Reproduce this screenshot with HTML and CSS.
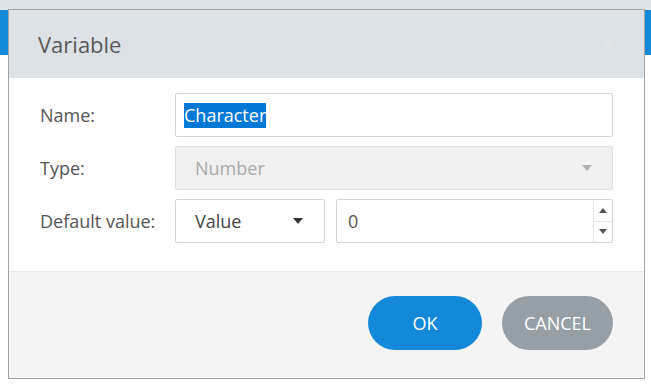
FILE: index.html
```html
<!DOCTYPE html>
<html lang="en">
<head>
  <meta charset="UTF-8">
  <meta name="viewport" content="width=device-width, initial-scale=1.0">
  <title>Variable</title>
  <link rel="stylesheet" href="styles.css">
</head>
<body>
  <!-- App behind the modal -->
  <div class="app-top"></div>
  <div class="app-bar"></div>

  <!-- Modal dialog -->
  <div class="dialog">
    <div class="dialog-header">
      <h2>Variable</h2>
      <span class="close">&#x2715;</span>
    </div>

    <div class="dialog-body">
      <label class="label">Name:</label>
      <div class="field"><span class="selected">Character</span></div>

      <label class="label">Type:</label>
      <div class="field disabled">
        <span>Number</span>
        <span class="caret light"></span>
      </div>

      <label class="label">Default value:</label>
      <div class="value-row">
        <div class="field select">
          <span>Value</span>
          <span class="caret"></span>
        </div>
        <div class="field number">
          <span class="num">0</span>
          <div class="spinner">
            <span class="up"></span>
            <span class="down"></span>
          </div>
        </div>
      </div>
    </div>

    <div class="dialog-footer">
      <button class="btn ok">OK</button>
      <button class="btn cancel">CANCEL</button>
    </div>
  </div>
</body>
</html>
```

FILE: styles.css
```css
* {
  margin: 0;
  padding: 0;
  box-sizing: border-box;
}
body {
  background: #fff;
  font-family: 'Open Sans', 'Noto Sans', sans-serif;
  color: #555;
}

/* sfondo dell'app */
.app-top {
  height: 10px;
  background: #dde2e6;
}
.app-bar {
  height: 45px;
  background: #1589d9;
}

/* dialog */
.dialog {
  position: absolute;
  left: 8px;
  top: 9px;
  width: 637px;
  border: 1px solid #a3a3a3;
  background: #fff;
}
.dialog-header {
  height: 68px;
  background: #dde2e6;
  display: flex;
  align-items: center;
  justify-content: space-between;
  padding: 0 30px 0 29px;
}
.dialog-header h2 {
  font-size: 22px;
  font-weight: 400;
  color: #595959;
}
.close {
  color: #e4e8eb;
  font-size: 13px;
}

.dialog-body {
  display: grid;
  grid-template-columns: 135px 1fr;
  row-gap: 9px;
  align-items: center;
  padding: 15px 31px 28px 31px;
}
.label {
  font-size: 18px;
  color: #555;
}

.field {
  height: 44px;
  border: 1px solid #cfd7de;
  border-radius: 2px;
  background: #fff;
  display: flex;
  align-items: center;
  padding: 0 8px;
  font-size: 18px;
  color: #444;
}
.selected {
  background: #0078d7;
  color: #fff;
  line-height: 25px;
}
.field.disabled {
  background: #f0f0f0;
  border-color: #dcdfe1;
  color: #aaa;
  justify-content: space-between;
  padding: 0 20px 0 19px;
}

.caret {
  width: 0;
  height: 0;
  border-left: 5px solid transparent;
  border-right: 5px solid transparent;
  border-top: 6px solid #333;
}
.caret.light {
  border-top-color: #b0b0b0;
}

.value-row {
  display: flex;
  gap: 11px;
}
.field.select {
  width: 150px;
  justify-content: space-between;
  padding: 0 21px 0 19px;
}
.field.number {
  flex: 1;
  padding: 0 0 0 11px;
  justify-content: space-between;
}
.num {
  color: #555;
}
.spinner {
  width: 19px;
  height: 100%;
  border-left: 1px solid #e2e6e9;
  display: flex;
  flex-direction: column;
}
.spinner span {
  flex: 1;
  display: flex;
  align-items: center;
  justify-content: center;
}
.spinner .up {
  border-bottom: 1px solid #e2e6e9;
}
.spinner .up::after,
.spinner .down::after {
  content: '';
  border-left: 4px solid transparent;
  border-right: 4px solid transparent;
}
.spinner .up::after {
  border-bottom: 5px solid #555;
}
.spinner .down::after {
  border-top: 5px solid #555;
}

.dialog-footer {
  background: #f4f4f4;
  border-top: 1px solid #e2e7ea;
  height: 107px;
  display: flex;
  justify-content: flex-end;
  align-items: center;
  gap: 20px;
  padding: 0 31px 4px 0;
}
.btn {
  height: 54px;
  border: none;
  border-radius: 27px;
  color: #fff;
  font-family: 'Open Sans', 'Noto Sans', sans-serif;
  font-size: 18px;
}
.btn.ok {
  width: 114px;
  background: #1589d9;
}
.btn.cancel {
  width: 111px;
  background: #969fa6;
}
```
